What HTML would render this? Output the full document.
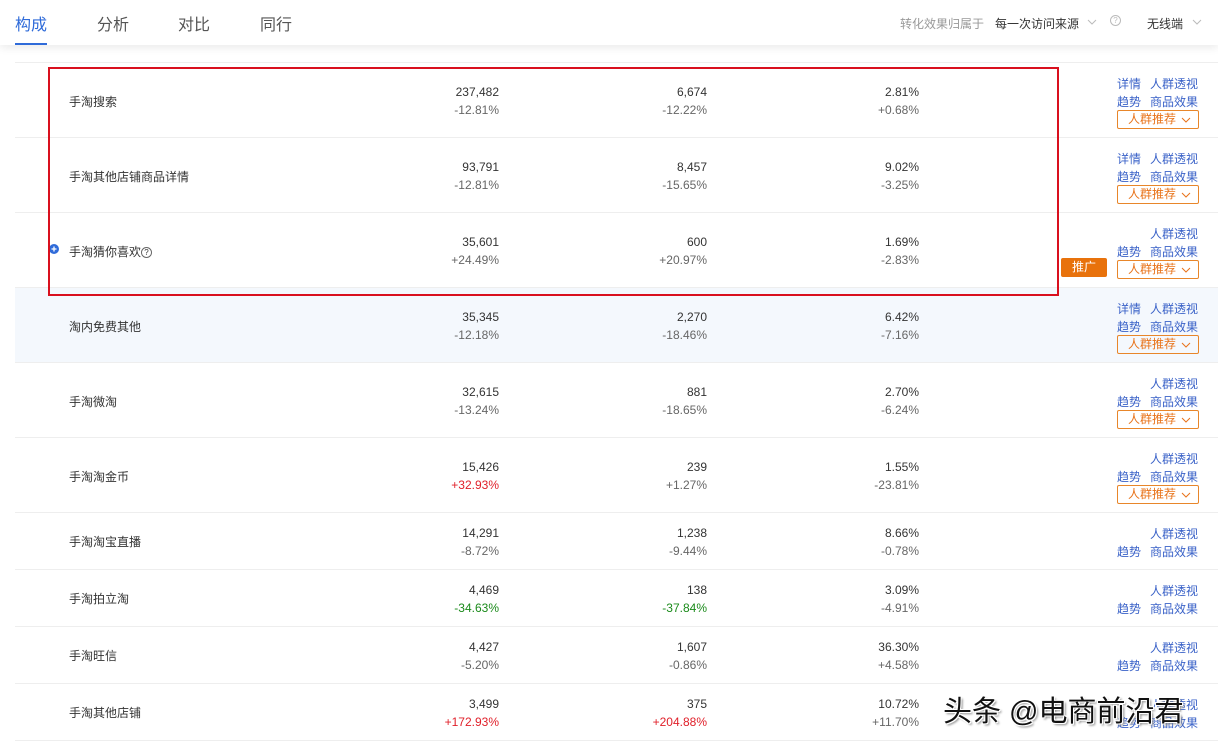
<!DOCTYPE html>
<html><head><meta charset="utf-8"><style>
*{margin:0;padding:0;box-sizing:border-box}
body{width:1218px;height:741px;overflow:hidden;background:#fff;font-family:"Liberation Sans","Noto Sans CJK SC",sans-serif;color:#333;font-size:12px;position:relative}
.hdr{position:absolute;left:0;top:0;width:1218px;height:45px;background:#fff;box-shadow:0 3px 8px rgba(0,0,0,0.08);z-index:5}
.tab{position:absolute;top:11px;font-size:16px;color:#555}
.a{position:absolute;white-space:nowrap}
.r{position:absolute;left:15px;width:1203px;border-bottom:1px solid #eee}
.n{position:absolute;left:54px;color:#333}
.v{position:absolute;text-align:right;width:120px;color:#333;margin-top:2px}
.c{position:absolute;text-align:right;width:120px;color:#666;margin-top:2px}
.lk{position:absolute;color:#3a62c8}
.btn{position:absolute;left:1102px;width:82px;height:19px;border:1px solid #e8862a;border-radius:2px;color:#e8731a;font-size:12px;line-height:17px;padding-left:10px;margin-top:1px}
.btn svg{position:absolute;left:63px;top:6px}
.red{color:#e0202a}.grn{color:#1a8a1a}
</style></head><body>
<div class="hdr">
<div class="tab" style="left:15px;color:#2f6bd9">构成</div>
<div style="position:absolute;left:15px;top:43px;width:32px;height:2px;background:#2f6bd9"></div>
<div class="tab" style="left:97px">分析</div>
<div class="tab" style="left:178px">对比</div>
<div class="tab" style="left:260px">同行</div>
<div class="a" style="left:900px;top:15px;color:#999">转化效果归属于</div>
<div class="a" style="left:995px;top:15px;color:#333">每一次访问来源</div>
<svg class="a" style="left:1087px;top:19px" width="10" height="6"><path d="M1 1l4 4 4-4" fill="none" stroke="#bbb"/></svg>
<div class="a" style="left:1110px;top:15px;color:#bbb;border:1px solid #bbb;border-radius:50%;width:11px;height:11px;line-height:9px;text-align:center;font-size:8px">?</div>
<div class="a" style="left:1147px;top:15px;color:#333">无线端</div>
<svg class="a" style="left:1192px;top:19px" width="10" height="6"><path d="M1 1l4 4 4-4" fill="none" stroke="#bbb"/></svg>
</div>
<div class="r" style="top:46px;height:17px"></div>

<div class="r" style="top:63px;height:75px"><div class="n" style="top:30px">手淘搜索</div><div class="v" style="left:364px;top:20px">237,482</div><div class="c" style="left:364px;top:38px">-12.81%</div><div class="v" style="left:572px;top:20px">6,674</div><div class="c" style="left:572px;top:38px">-12.22%</div><div class="v" style="left:784px;top:20px">2.81%</div><div class="c" style="left:784px;top:38px">+0.68%</div><div class="lk" style="left:1102px;top:12px">详情</div><div class="lk" style="left:1135px;top:12px">人群透视</div><div class="lk" style="left:1102px;top:30px">趋势</div><div class="lk" style="left:1135px;top:30px">商品效果</div><div class="btn" style="top:46px">人群推荐<svg width="10" height="6"><path d="M1 1l4 4 4-4" fill="none" stroke="#e8731a"/></svg></div></div>

<div class="r" style="top:138px;height:75px"><div class="n" style="top:30px">手淘其他店铺商品详情</div><div class="v" style="left:364px;top:20px">93,791</div><div class="c" style="left:364px;top:38px">-12.81%</div><div class="v" style="left:572px;top:20px">8,457</div><div class="c" style="left:572px;top:38px">-15.65%</div><div class="v" style="left:784px;top:20px">9.02%</div><div class="c" style="left:784px;top:38px">-3.25%</div><div class="lk" style="left:1102px;top:12px">详情</div><div class="lk" style="left:1135px;top:12px">人群透视</div><div class="lk" style="left:1102px;top:30px">趋势</div><div class="lk" style="left:1135px;top:30px">商品效果</div><div class="btn" style="top:46px">人群推荐<svg width="10" height="6"><path d="M1 1l4 4 4-4" fill="none" stroke="#e8731a"/></svg></div></div>

<div class="r" style="top:213px;height:75px"><svg style="position:absolute;left:34px;top:31px" width="10" height="10"><circle cx="5" cy="5" r="5" fill="#2f6bd9"/><path d="M2.5 5h5M5 2.5v5" stroke="#fff" stroke-width="1.3"/></svg><div class="n" style="top:30px">手淘猜你喜欢<span style="display:inline-block;width:11px;height:11px;border:1px solid #666;border-radius:50%;font-size:8px;line-height:9px;text-align:center;vertical-align:1px">?</span></div><div class="v" style="left:364px;top:20px">35,601</div><div class="c" style="left:364px;top:38px">+24.49%</div><div class="v" style="left:572px;top:20px">600</div><div class="c" style="left:572px;top:38px">+20.97%</div><div class="v" style="left:784px;top:20px">1.69%</div><div class="c" style="left:784px;top:38px">-2.83%</div><div class="lk" style="left:1135px;top:12px">人群透视</div><div class="lk" style="left:1102px;top:30px">趋势</div><div class="lk" style="left:1135px;top:30px">商品效果</div><div style="position:absolute;left:1046px;top:45px;width:46px;height:19px;background:#e8720c;color:#fff;border-radius:2px;text-align:center;line-height:19px">推广</div><div class="btn" style="top:46px">人群推荐<svg width="10" height="6"><path d="M1 1l4 4 4-4" fill="none" stroke="#e8731a"/></svg></div></div>

<div class="r" style="top:288px;height:75px;background:#f4f8fd"><div class="n" style="top:30px">淘内免费其他</div><div class="v" style="left:364px;top:20px">35,345</div><div class="c" style="left:364px;top:38px">-12.18%</div><div class="v" style="left:572px;top:20px">2,270</div><div class="c" style="left:572px;top:38px">-18.46%</div><div class="v" style="left:784px;top:20px">6.42%</div><div class="c" style="left:784px;top:38px">-7.16%</div><div class="lk" style="left:1102px;top:12px">详情</div><div class="lk" style="left:1135px;top:12px">人群透视</div><div class="lk" style="left:1102px;top:30px">趋势</div><div class="lk" style="left:1135px;top:30px">商品效果</div><div class="btn" style="top:46px">人群推荐<svg width="10" height="6"><path d="M1 1l4 4 4-4" fill="none" stroke="#e8731a"/></svg></div></div>

<div class="r" style="top:363px;height:75px"><div class="n" style="top:30px">手淘微淘</div><div class="v" style="left:364px;top:20px">32,615</div><div class="c" style="left:364px;top:38px">-13.24%</div><div class="v" style="left:572px;top:20px">881</div><div class="c" style="left:572px;top:38px">-18.65%</div><div class="v" style="left:784px;top:20px">2.70%</div><div class="c" style="left:784px;top:38px">-6.24%</div><div class="lk" style="left:1135px;top:12px">人群透视</div><div class="lk" style="left:1102px;top:30px">趋势</div><div class="lk" style="left:1135px;top:30px">商品效果</div><div class="btn" style="top:46px">人群推荐<svg width="10" height="6"><path d="M1 1l4 4 4-4" fill="none" stroke="#e8731a"/></svg></div></div>

<div class="r" style="top:438px;height:75px"><div class="n" style="top:30px">手淘淘金币</div><div class="v" style="left:364px;top:20px">15,426</div><div class="c red" style="left:364px;top:38px">+32.93%</div><div class="v" style="left:572px;top:20px">239</div><div class="c" style="left:572px;top:38px">+1.27%</div><div class="v" style="left:784px;top:20px">1.55%</div><div class="c" style="left:784px;top:38px">-23.81%</div><div class="lk" style="left:1135px;top:12px">人群透视</div><div class="lk" style="left:1102px;top:30px">趋势</div><div class="lk" style="left:1135px;top:30px">商品效果</div><div class="btn" style="top:46px">人群推荐<svg width="10" height="6"><path d="M1 1l4 4 4-4" fill="none" stroke="#e8731a"/></svg></div></div>

<div class="r" style="top:513px;height:57px"><div class="n" style="top:20px">手淘淘宝直播</div><div class="v" style="left:364px;top:11px">14,291</div><div class="c" style="left:364px;top:29px">-8.72%</div><div class="v" style="left:572px;top:11px">1,238</div><div class="c" style="left:572px;top:29px">-9.44%</div><div class="v" style="left:784px;top:11px">8.66%</div><div class="c" style="left:784px;top:29px">-0.78%</div><div class="lk" style="left:1135px;top:12px">人群透视</div><div class="lk" style="left:1102px;top:30px">趋势</div><div class="lk" style="left:1135px;top:30px">商品效果</div></div>

<div class="r" style="top:570px;height:57px"><div class="n" style="top:20px">手淘拍立淘</div><div class="v" style="left:364px;top:11px">4,469</div><div class="c grn" style="left:364px;top:29px">-34.63%</div><div class="v" style="left:572px;top:11px">138</div><div class="c grn" style="left:572px;top:29px">-37.84%</div><div class="v" style="left:784px;top:11px">3.09%</div><div class="c" style="left:784px;top:29px">-4.91%</div><div class="lk" style="left:1135px;top:12px">人群透视</div><div class="lk" style="left:1102px;top:30px">趋势</div><div class="lk" style="left:1135px;top:30px">商品效果</div></div>

<div class="r" style="top:627px;height:57px"><div class="n" style="top:20px">手淘旺信</div><div class="v" style="left:364px;top:11px">4,427</div><div class="c" style="left:364px;top:29px">-5.20%</div><div class="v" style="left:572px;top:11px">1,607</div><div class="c" style="left:572px;top:29px">-0.86%</div><div class="v" style="left:784px;top:11px">36.30%</div><div class="c" style="left:784px;top:29px">+4.58%</div><div class="lk" style="left:1135px;top:12px">人群透视</div><div class="lk" style="left:1102px;top:30px">趋势</div><div class="lk" style="left:1135px;top:30px">商品效果</div></div>

<div class="r" style="top:684px;height:57px"><div class="n" style="top:20px">手淘其他店铺</div><div class="v" style="left:364px;top:11px">3,499</div><div class="c red" style="left:364px;top:29px">+172.93%</div><div class="v" style="left:572px;top:11px">375</div><div class="c red" style="left:572px;top:29px">+204.88%</div><div class="v" style="left:784px;top:11px">10.72%</div><div class="c" style="left:784px;top:29px">+11.70%</div><div class="lk" style="left:1135px;top:12px">人群透视</div><div class="lk" style="left:1102px;top:30px">趋势</div><div class="lk" style="left:1135px;top:30px">商品效果</div></div>

<div style="position:absolute;left:48px;top:67px;width:1011px;height:229px;border:2px solid #d9101e;z-index:3"></div>
<div class="a" style="left:943px;top:688px;font-size:29px;color:#111;z-index:6;text-shadow:1px 1px 0 #fff,-1px -1px 0 #fff,1px -1px 0 #fff,-1px 1px 0 #fff,2px 2px 2px #888">头条 @电商前沿君</div>
</body></html>
